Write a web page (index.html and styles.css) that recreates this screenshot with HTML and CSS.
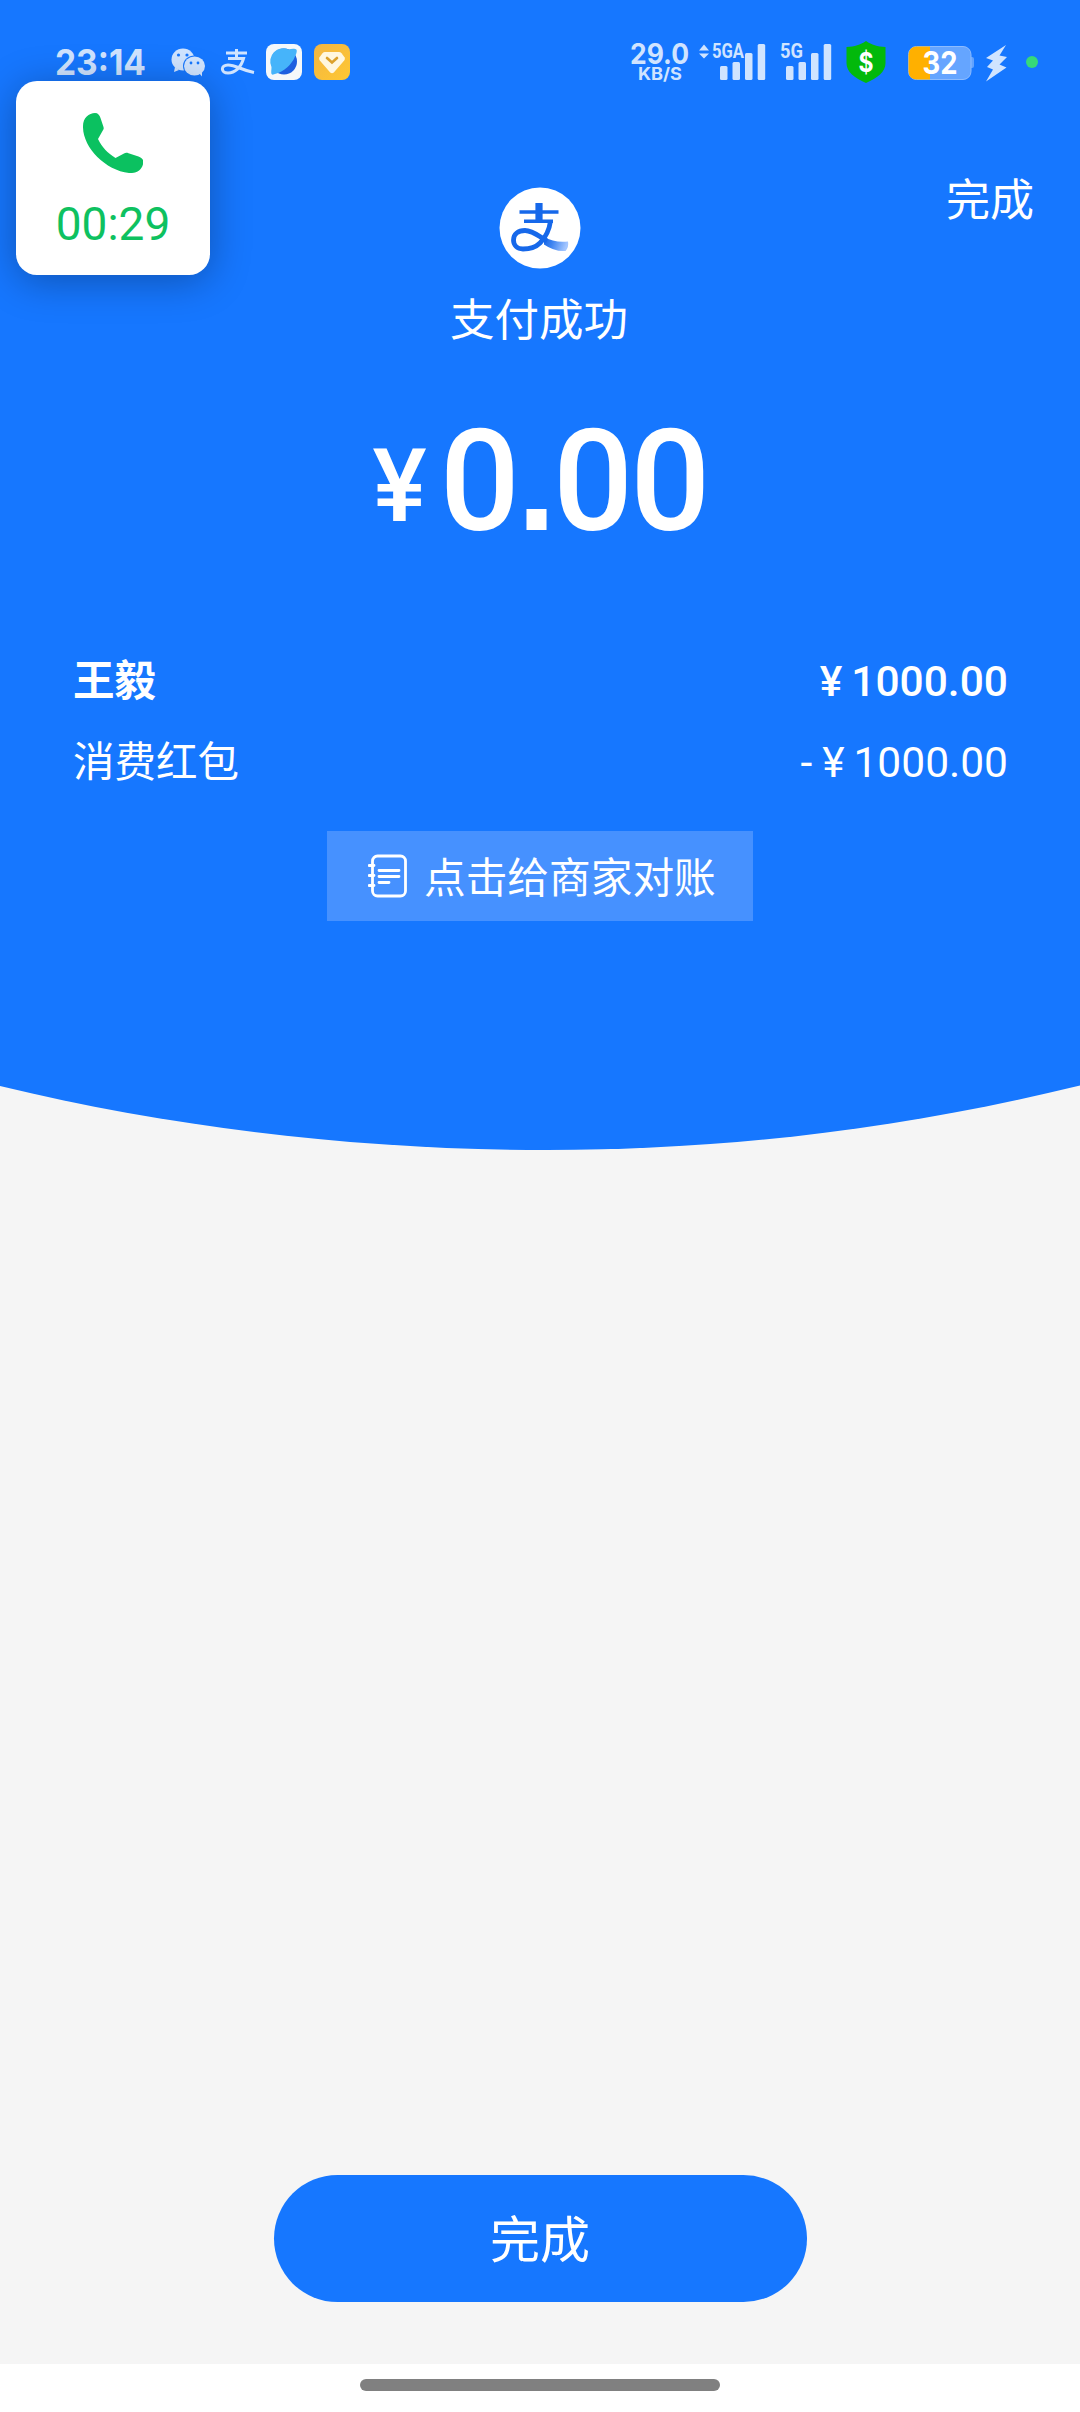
FILE: index.html
```html
<!DOCTYPE html>
<html lang="zh-CN">
<head>
<meta charset="utf-8">
<title>支付成功</title>
<link rel="stylesheet" href="styles.css">
</head>
<body>
<svg class="defs" aria-hidden="true">
  <defs>
    <linearGradient id="tail" x1="0" y1="0" x2="1" y2="0.2">
      <stop offset="0" stop-color="#1263e6"/><stop offset="0.4" stop-color="#3d83f0"/><stop offset="1" stop-color="#a4c6ff"/>
    </linearGradient>
    <linearGradient id="gold" x1="0" y1="0" x2="1" y2="1">
      <stop offset="0" stop-color="#f2b544"/><stop offset="1" stop-color="#ffc831"/>
    </linearGradient>
  </defs>
</svg>
<div class="screen">
  <header class="status">
    <div class="status-left">
      <svg class="clock" viewBox="50 40 100 44"><text x="55" y="74.500" textLength="91" lengthAdjust="spacingAndGlyphs">23:14</text></svg>
      <svg class="app-mark" viewBox="171 40 36 44">
        <ellipse cx="183" cy="59.500" rx="11.500" ry="11"/><path d="M175 67l-1 5 5-2z"/>
        <ellipse class="cut" cx="194.500" cy="66" rx="11.500" ry="10.500"/>
        <ellipse cx="194.500" cy="66" rx="10.500" ry="9.500"/><path d="M199 73l3 3.500v-6z"/>
        <circle class="eye" cx="178.500" cy="55" r="1.600"/><circle class="eye" cx="187" cy="55" r="1.600"/>
        <circle class="eye" cx="191" cy="63" r="1.400"/><circle class="eye" cx="198" cy="63" r="1.400"/>
      </svg>
      <svg class="pay-mark" viewBox="220 40 36 44">
        <path d="M226 53h21M236.500 49v9M228 58.500h15.500c-2.500 9-8.500 14.500-15.500 14.500-7.500 0-7.500-8 0-8 8 0 13 5 26 7.500" />
      </svg>
      <svg class="app-tile" viewBox="266 40 36 44">
        <rect x="266" y="44" width="36" height="36" rx="8" fill="#f5f8fa"/>
        <circle cx="284" cy="61.500" r="13" fill="#1d5fe0"/>
        <path d="M271.500 67a13 13 0 0 1 17-17.500c3-.8 7-1 8 .3 1 2-1 6-3 10-5 8-12 13-21 15-2-1-1-4-1-7.800z" fill="#46b4fa"/>
      </svg>
      <svg class="app-tile" viewBox="314 40 36 44">
        <rect x="314" y="44" width="36" height="36" rx="8" fill="url(#gold)"/>
        <path d="M325 52h14q1.500 0 2.500 1.300l3 4q1 1.700-.3 3.200l-10.400 12q-1.800 1.600-3.600 0l-10.400-12q-1.300-1.500-.3-3.200l3-4Q323.500 52 325 52z" fill="#fff7e0"/>
        <path d="M327 58l5 4.500 5-4.500" fill="none" stroke="#dba12d" stroke-width="2.600" stroke-linecap="round"/>
      </svg>
    </div>
    <div class="status-right">
      <svg class="speed" viewBox="628 40 64 44">
        <text class="speed-value" x="630" y="63.500" textLength="59" lengthAdjust="spacingAndGlyphs">29.0</text>
        <text class="speed-unit" x="638" y="79.500" textLength="44" lengthAdjust="spacingAndGlyphs">KB/S</text>
      </svg>
      <svg class="signal-wide" viewBox="698 40 70 44">
        <path d="M699 50.500l5-6 5 6zM699 53.500l5 5 5-5z"/>
        <text x="712" y="58" textLength="32" lengthAdjust="spacingAndGlyphs">5GA</text>
        <rect x="720" y="66" width="7.500" height="14" rx="1.500"/><rect x="732.500" y="62" width="7.500" height="18" rx="1.500"/><rect x="745" y="53" width="7.500" height="27" rx="1.500"/><rect x="757.700" y="44" width="7.500" height="36" rx="1.500"/>
      </svg>
      <svg class="signal" viewBox="778 40 56 44">
        <text x="780" y="58" textLength="23" lengthAdjust="spacingAndGlyphs">5G</text>
        <rect x="786" y="66" width="7.500" height="14" rx="1.500"/><rect x="798.500" y="62" width="7.500" height="18" rx="1.500"/><rect x="811" y="53" width="7.500" height="27" rx="1.500"/><rect x="823.700" y="44" width="7.500" height="36" rx="1.500"/>
      </svg>
      <svg class="shield" viewBox="846 40 40 44">
        <path d="M866 41c6 4 11 5.500 19.500 6v16c0 9-8 15-19.500 20-11.500-5-19.500-11-19.500-20V47c8.500-.5 13.500-2 19.500-6z" fill="#02b90b"/>
        <text x="858.500" y="71.500" textLength="15" lengthAdjust="spacingAndGlyphs">$</text>
      </svg>
      <svg class="battery" viewBox="907 40 68 44">
        <path d="M971 57h1q2 0 2 2v7q0 2-2 2h-1z" fill="#62a3ff"/>
        <rect x="908.500" y="46.500" width="62.500" height="33" rx="8" fill="#65a5ff" stroke="#8dbcff"/>
        <path d="M930 46.500v33h-13.500a8 8 0 0 1-8-8v-17a8 8 0 0 1 8-8z" fill="#ffb000"/>
        <text x="922.500" y="74" textLength="35" lengthAdjust="spacingAndGlyphs">32</text>
      </svg>
      <svg class="bolt" viewBox="985 40 22 44"><path d="M1006 45L986 58l7 2.500-6 6.500 6 2.500-7 12 20.500-14-7-3 7.500-7.500-7.500-1.500z"/></svg>
      <span class="privacy-dot"></span>
    </div>
  </header>

  <main class="page">
    <section class="hero">
      <a class="done-link">完成</a>
      <svg class="pay-logo" viewBox="0 0 82 82">
        <circle cx="41" cy="41" r="40.500" fill="#fff"/>
        <path d="M45 50C52 54 60 55.500 69 54.500Q70 60 66.500 64 56 65 45 57.500z" fill="url(#tail)"/>
        <g fill="none" stroke="#1668ea">
          <path d="M20.500 25h39M25 34.200h29" stroke-width="3.600"/>
          <path d="M40 16v19" stroke-width="7.200"/>
          <path d="M51.500 34C50 45 46 51 41 56 36 61 30 62 24 62c-6 0-9.500-4-9.500-9C14.500 47 19 43.500 26 43.500c8 0 14 6 22 10.500" stroke-width="4.800"/>
        </g>
      </svg>
      <h1 class="result">支付成功</h1>
      <p class="total"><span class="currency">¥</span><span class="figure">0<span class="point">.</span>00</span></p>
      <dl class="bill">
        <div class="bill-row payee"><dt>王毅</dt><dd><span class="yen">¥</span>1000.00</dd></div>
        <div class="bill-row"><dt>消费红包</dt><dd><span class="minus">-</span><span class="yen">¥</span>1000.00</dd></div>
      </dl>
      <a class="reconcile">
        <svg class="ledger" viewBox="0 0 40 44">
          <rect x="4.500" y="2" width="33" height="40" rx="5"/>
          <path d="M1 11.500h5M1 21.500h5M1 31.500h5M11 16.500h20M11 22.500h20M11 28.500h10"/>
        </svg>
        <span>点击给商家对账</span>
      </a>
    </section>
    <svg class="curve" viewBox="0 0 1080 66" preserveAspectRatio="none"><path d="M0 0H1080V.5C905 43.500 730 65 547 65 365 65 175 43.500 0 1z"/></svg>
    <button class="done">完成</button>
  </main>
  <footer class="nav"><span class="handle"></span></footer>

  <aside class="call">
    <svg viewBox="0 0 60 60"><path d="M12 0c3 0 4.500 2 5.500 5l3 9c.5 2 0 2.500-1 4l-4.500 8c4 8 9.500 14 17.500 19l8.500-4.500c1.500-1 3-.8 4.500-.3l10 3.300c3.500 1.300 5.500 3.500 4.800 6.500C59 57 54 60.500 46 60 22 57-.5 34 0 13 0 5 6 0 12 0z"/></svg>
    <span>00:29</span>
  </aside>
</div>
</body>
</html>
```
FILE: styles.css
```css
* { box-sizing: border-box; }
body { margin: 0; font-family: Roboto, "Noto Sans CJK SC", sans-serif; color: #fff; }
svg { display: block; flex: none; }
.defs { position: absolute; width: 0; height: 0; }
.screen { position: relative; width: 1080px; height: 2412px; overflow: hidden; display: flex; flex-direction: column; background: #f5f5f5; }

.status { display: flex; justify-content: space-between; height: 100px; padding: 40px 42px 0 50px; background: #1677ff; font-family: Inter, "Open Sans", sans-serif; }
.status-left, .status-right { display: flex; height: 44px; align-items: center; }
.status svg { height: 44px; fill: #d0e4ff; overflow: visible; }
.clock { width: 100px; margin-right: 21px; font-size: 36px; font-weight: 700; }
.app-mark { width: 36px; margin-right: 13px; }
.app-mark .cut, .app-mark .eye { fill: #1677ff; }
.status .pay-mark { width: 36px; margin-right: 10px; fill: none; stroke: #d0e4ff; stroke-width: 3; }
.app-tile { width: 36px; margin-right: 12px; }
.speed { width: 64px; margin-right: 6px; font-weight: 700; }
.speed-value { font-size: 28px; }
.speed-unit { font-size: 17px; }
.signal-wide, .signal { font: 700 20px Roboto, sans-serif; }
.signal-wide { width: 70px; margin-right: 10px; }
.signal { width: 56px; margin-right: 12px; }
.shield { width: 40px; margin-right: 21px; font-size: 27px; font-weight: 700; }
.battery { width: 68px; margin-right: 10px; font-size: 31px; font-weight: 700; }
.shield text, .battery text { fill: #fff; }
.bolt { width: 22px; margin-right: 19px; }
.privacy-dot { width: 12px; height: 12px; border-radius: 50%; background: #36d979; }

.page { flex: 1; display: flex; flex-direction: column; align-items: center; }
.hero { width: 100%; height: 985px; display: flex; flex-direction: column; align-items: center; background: #1677ff; }
.done-link { align-self: flex-end; margin: 69px 46px 0 0; font-size: 44px; line-height: 64px; }
.pay-logo { width: 82px; height: 82px; margin: -46px 1px 0 0; }
.result { margin: 19px 2px 0 0; font-size: 44.5px; font-weight: 400; line-height: 66px; }
.total { display: flex; align-items: baseline; margin: 45px 0 0; height: 164px; line-height: 164px; font-weight: 500; }
.currency { position: relative; top: -9px; font-size: 102px; margin-right: 13px; }
.figure { font-size: 141px; letter-spacing: -3px; }
.point { font-family: "Liberation Sans", sans-serif; font-weight: 700; }
.bill { width: 100%; margin: 78px 0 0; padding: 0 72px 0 73px; font-size: 41.5px; }
.bill-row { display: flex; justify-content: space-between; height: 81px; line-height: 81px; }
.payee { font-weight: 500; }
.payee dt { font-weight: 700; }
.bill dd { margin: 0; font-size: 42.5px; }
.yen { margin-right: 9px; }
.minus { margin-right: 10px; }
.reconcile { display: flex; align-items: center; width: 426px; height: 90px; margin-top: 28px; padding-left: 41px; background: #4691ff; font-size: 41.7px; }
.reconcile span { margin-top: -3px; }
.ledger { width: 40px; height: 44px; margin-right: 16px; fill: none; stroke: #fff; stroke-width: 2.8; stroke-linecap: round; }
.curve { width: 1080px; height: 66px; fill: #1677ff; }
.done { width: 533px; height: 127px; margin-top: auto; margin-bottom: 62px; padding: 0 0 6px; border: 0; border-radius: 64px; background: #1677ff; color: #fff; font: 400 50px "Noto Sans CJK SC", sans-serif; }
.nav { height: 48px; padding-top: 15px; background: #fff; }
.handle { display: block; width: 360px; height: 12px; margin: 0 auto; border-radius: 6px; background: #808080; }

.call { position: absolute; left: 16px; top: 81px; width: 194px; height: 194px; padding-top: 32px; display: flex; flex-direction: column; align-items: center; border-radius: 21px; background: #fff; box-shadow: 0 6px 40px rgba(0, 0, 0, .3); color: #0ec160; font-size: 46px; }
.call svg { width: 60px; height: 60px; fill: #0bc160; }
.call span { margin-top: 24px; line-height: 54px; }
```
